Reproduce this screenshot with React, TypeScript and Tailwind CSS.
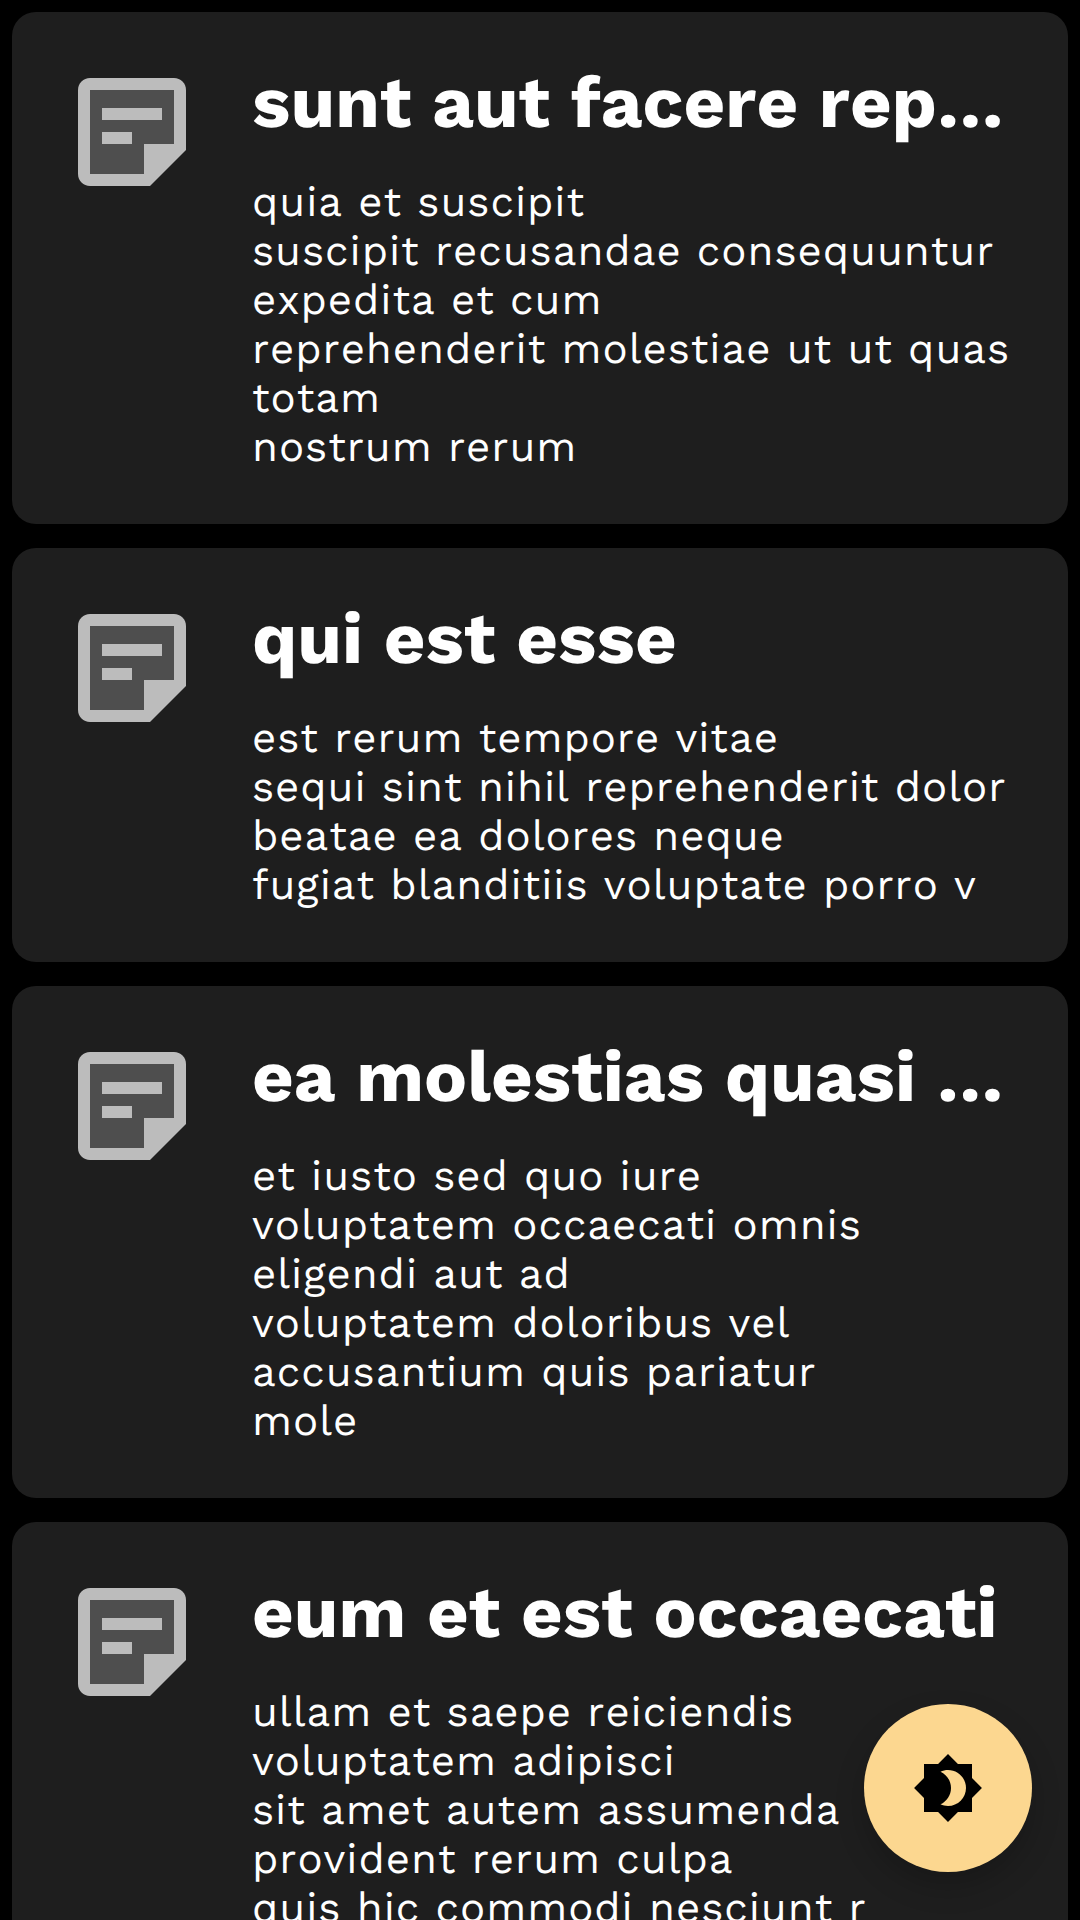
type Post = { title: string; body: string[] };

const posts: Post[] = [
  {
    title: "sunt aut facere rep…",
    body: [
      "quia et suscipit",
      "suscipit recusandae consequuntur",
      "expedita et cum",
      "reprehenderit molestiae ut ut quas",
      "totam",
      "nostrum rerum",
    ],
  },
  {
    title: "qui est esse",
    body: [
      "est rerum tempore vitae",
      "sequi sint nihil reprehenderit dolor",
      "beatae ea dolores neque",
      "fugiat blanditiis voluptate porro v",
    ],
  },
  {
    title: "ea molestias quasi …",
    body: [
      "et iusto sed quo iure",
      "voluptatem occaecati omnis",
      "eligendi aut ad",
      "voluptatem doloribus vel",
      "accusantium quis pariatur",
      "mole",
    ],
  },
  {
    title: "eum et est occaecati",
    body: [
      "ullam et saepe reiciendis",
      "voluptatem adipisci",
      "sit amet autem assumenda",
      "provident rerum culpa",
      "quis hic commodi nesciunt r",
    ],
  },
];

function NoteIcon() {
  return (
    <svg viewBox="0 0 24 24" className="size-36 shrink-0">
      <path
        className="fill-[#bcbcbc]"
        d="M19 3H5c-1.1 0-2 .9-2 2v14c0 1.1.9 2 2 2h10l6-6V5c0-1.1-.9-2-2-2z"
      />
      <path className="fill-[#4e4e4e]" d="M5 5v14h9v-5h5V5z" />
      <path className="fill-[#bcbcbc]" d="M7 8h10v2H7zM7 12h5v2H7z" />
    </svg>
  );
}

function PostCard({ title, body }: Post) {
  return (
    <article className="flex shrink-0 gap-12 rounded-3xl bg-[#1e1e1e] px-12 pt-12 pb-[52px]">
      <NoteIcon />
      <div className="min-w-0 flex-1">
        <h2 className="mt-px text-[72px] leading-[84px] font-bold tracking-[0.1px] whitespace-nowrap">
          {title}
        </h2>
        <div className="mt-[33px] text-[42px] leading-[49px] tracking-[0.96px] whitespace-nowrap">
          {body.map((line) => (
            <p key={line}>{line}</p>
          ))}
        </div>
      </div>
    </article>
  );
}

export default function App() {
  return (
    <main className="relative flex h-[1920px] w-[1080px] flex-col gap-6 overflow-hidden bg-black p-3 font-['Work_Sans','Inter',sans-serif] text-white [font-kerning:none] [text-rendering:geometricPrecision]">
      {posts.map((post) => (
        <PostCard key={post.title} {...post} />
      ))}
      <button
        aria-label="Toggle theme"
        className="absolute right-12 bottom-12 flex size-42 items-center justify-center rounded-full bg-[#fcd790] shadow-[0_14px_30px_rgba(0,0,0,0.2)]"
      >
        <svg viewBox="0 0 24 24" className="size-18 fill-black">
          <path d="M20 8.69V4h-4.69L12 .69 8.69 4H4v4.69L.69 12 4 15.31V20h4.69L12 23.31 15.31 20H20v-4.69L23.31 12 20 8.69zM12 18c-.89 0-1.74-.2-2.5-.55C11.56 16.5 13 14.42 13 12s-1.44-4.5-3.5-5.45C10.26 6.2 11.11 6 12 6c3.31 0 6 2.69 6 6s-2.69 6-6 6z" />
        </svg>
      </button>
    </main>
  );
}
